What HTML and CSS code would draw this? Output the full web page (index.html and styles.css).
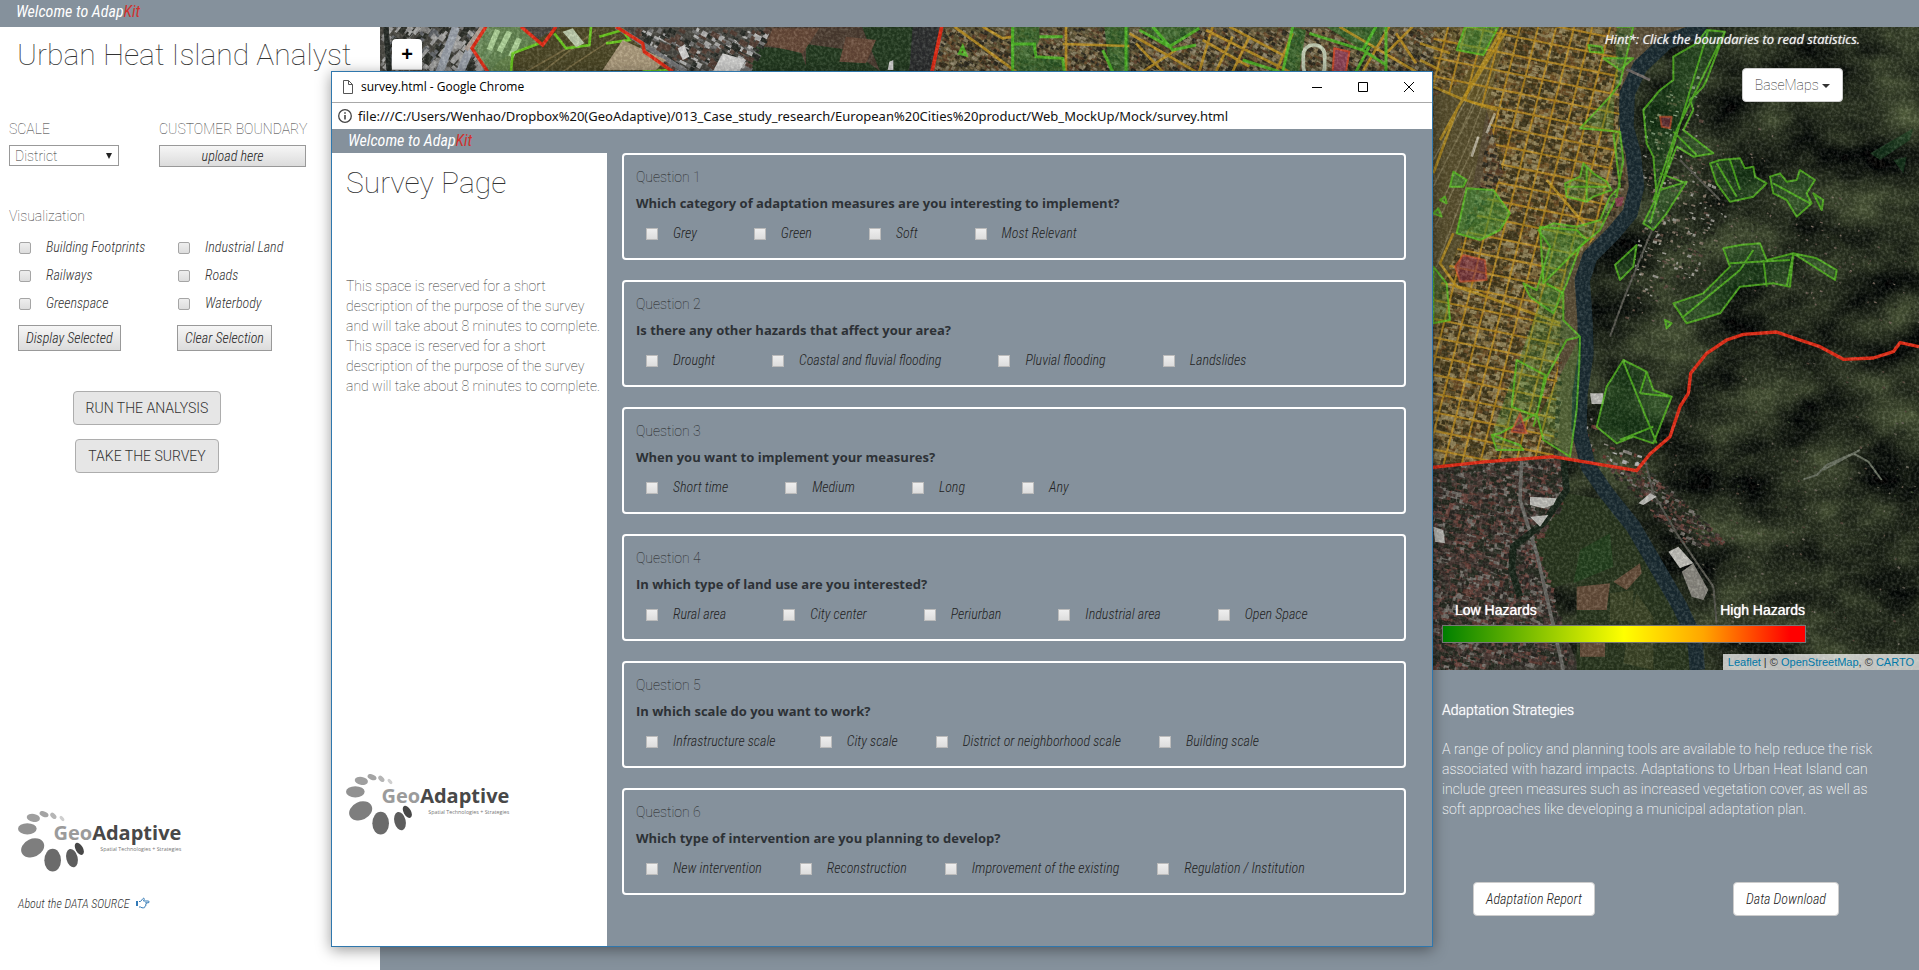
FILE: index.html
```html
<!DOCTYPE html>
<html lang="en">
<head>
<meta charset="utf-8">
<title>AdapKit - Urban Heat Island Analyst</title>
<link rel="stylesheet" href="styles.css">
</head>
<body>
<svg class="defs" width="0" height="0" aria-hidden="true">
  <symbol id="logo" viewBox="54 152 492 182">
    <ellipse cx="82" cy="205" rx="28" ry="17" fill="#919191"/>
    <ellipse cx="98" cy="262" rx="36" ry="27" fill="#7e7e7e" transform="rotate(-25 98 262)"/>
    <ellipse cx="158" cy="299" rx="25" ry="34" fill="#6b6b6b"/>
    <ellipse cx="216" cy="293" rx="17" ry="28" fill="#5d5d5d" transform="rotate(-14 216 293)"/>
    <ellipse cx="238" cy="265" rx="11" ry="20" fill="#474747" transform="rotate(-30 238 265)"/>
    <ellipse cx="100" cy="172" rx="20" ry="12" fill="#9f9f9f" transform="rotate(10 100 172)"/>
    <ellipse cx="132" cy="161" rx="14" ry="8" fill="#a4a4a4" transform="rotate(22 132 161)"/>
    <ellipse cx="160" cy="166" rx="11" ry="7" fill="#b5b5b5" transform="rotate(45 160 166)"/>
    <ellipse cx="186" cy="174" rx="9" ry="5" fill="#cfcfcf" transform="rotate(50 186 174)"/>
    <text x="544" y="238" class="logo-name" text-anchor="end" fill="#484848"><tspan fill="#9b9b9b">Geo</tspan>Adaptive</text>
    <text x="544" y="270" class="logo-tag" text-anchor="end" fill="#777">Spatial Technologies + Strategies</text>
  </symbol>
</svg>

<header class="topbar">Welcome to Adap<span class="kit">Kit</span></header>

<div class="page">
  <aside class="sidebar">
    <h1 class="title">Urban Heat Island Analyst</h1>
    <div class="inputs">
      <div class="field">
        <label class="thin" for="scale">SCALE</label>
        <select id="scale" class="scale"><option>District</option></select>
      </div>
      <div class="field">
        <label class="thin" for="upload">CUSTOMER BOUNDARY</label>
        <button id="upload" class="classic upload">upload here</button>
      </div>
    </div>
    <h2 class="thin vis-title">Visualization</h2>
    <div class="layers">
      <label class="opt"><input type="checkbox">Building Footprints</label>
      <label class="opt"><input type="checkbox">Industrial Land</label>
      <label class="opt"><input type="checkbox">Railways</label>
      <label class="opt"><input type="checkbox">Roads</label>
      <label class="opt"><input type="checkbox">Greenspace</label>
      <label class="opt"><input type="checkbox">Waterbody</label>
      <div class="layer-btn"><button class="classic">Display Selected</button></div>
      <div class="layer-btn"><button class="classic">Clear Selection</button></div>
    </div>
    <div class="actions">
      <button class="big">RUN THE ANALYSIS</button>
      <button class="big">TAKE THE SURVEY</button>
    </div>
    <div class="side-foot">
      <svg class="logo" role="img" aria-label="GeoAdaptive"><use href="#logo"/></svg>
      <div class="about">About the DATA SOURCE
        <a href="#source" aria-label="Data source"><svg width="14" height="12" viewBox="0 0 14 12" fill="none" stroke="#337ab7"><path d="M1 4v5" stroke-width="2"/><path d="M3 4.500h1.500L7 1.500c1-.8 1.800.3 1 1.500L7.500 4H12c1.600 0 1.600 1.800 0 1.800H9.500M9.500 5.800c1.500.3 1.300 1.700 0 1.800M9 7.600c1.200.4 1 1.600 0 1.700M8.600 9.300c.6.800.1 1.500-.8 1.500H6L4.500 10H3"/></svg></a>
      </div>
    </div>
  </aside>

  <main class="main">
    <section class="map" aria-label="Map">
      <svg class="imagery" viewBox="380 27 1539 643" preserveAspectRatio="xMaxYMin slice" aria-hidden="true">
        <defs>
          <filter id="forest" x="0" y="0" width="100%" height="100%" color-interpolation-filters="sRGB">
            <feTurbulence type="fractalNoise" baseFrequency=".014 .022" numOctaves="6" seed="8"/>
            <feColorMatrix values=".5 0 0 0 -.115  .55 0 0 0 -.11  .35 0 0 0 -.065  0 0 0 0 1"/>
          </filter>
          <filter id="grain" x="0" y="0" width="100%" height="100%" color-interpolation-filters="sRGB">
            <feTurbulence type="fractalNoise" baseFrequency=".35" numOctaves="2" seed="3"/>
            <feColorMatrix values="2.2 0 0 0 -.85  2.2 0 0 0 -.85  2.2 0 0 0 -.9  0 0 0 0 .14"/>
          </filter>
          <clipPath id="streets"><path d="M250 80H590L600 400 560 600 540 700 440 800 420 1000 400 1366 40 1400V900L120 730 250 520 200 330 40 260V80Z"/></clipPath>
        </defs>
        <rect x="380" y="27" width="1539" height="643" filter="url(#forest)"/>

        <g transform="translate(1420 0) scale(.33333)">
          <path fill="#5d5039" d="M0 80H830L700 150 610 300 620 420 640 600 480 800 480 1380 0 1400Z"/>
          <path fill="#3b3832" d="M0 1390 420 1370 440 1480 350 1600 380 1760 480 2010H0Z"/>
          <path fill="#29371f" d="M440 1480 560 1500 700 1700 820 1900 840 2010H470V1740L380 1770 340 1620Z"/>
          <path fill="#24421f" d="M480 1650 570 1600 580 1700 460 1750Z"/>
          <path fill="#69503d" d="M470 1760 570 1750 560 1830H470ZM580 1745 660 1690 665 1720 620 1770ZM480 1920H555V1970H480Z"/>
          <path fill="#3e4729" d="M570 1780 640 1770 640 1860 570 1865ZM650 1780 700 1850 700 2010 610 1990 620 1920Z"/>
          <path fill="#1d4a26" opacity=".6" d="M1350 460 1480 385 1470 420 1380 480ZM1420 480 1460 470 1450 520Z"/>
        </g>
        <path fill="#4c4b46" d="M380 27H780L760 71H380Z"/>
        <path fill="#4f3f34" d="M766 27H1048L1040 71H750Z"/>
        <path fill="#243d22" d="M752 46 800 50 808 71H746ZM806 44 850 50 880 71H806ZM862 27 940 27 930 71 880 71Z"/>
        <path fill="#5c5437" d="M940 27H1460V71H930Z"/>
        <path fill="#4f4a28" d="M500 60 560 27 620 27 670 71H490Z"/>
        <g id="roofs"></g>

        <g transform="translate(1420 0) scale(.33333)" fill="none" stroke-linejoin="round">
          <path fill="#5c5230" d="M40 290 120 250 230 95 262 85 200 330 165 520 120 740 40 900Z"/>
          <g stroke="#9a8f6a" stroke-width="4" opacity=".55"><path d="M40 560 110 420 240 130M60 620 140 440 250 150M45 680 100 570 180 400M40 480 100 370 200 190M50 800 110 640 160 500M90 460 210 230"/></g>
          <path stroke="#d6d0bd" stroke-width="8" opacity=".8" d="M155 470 175 410M200 400 225 340"/>
          <path stroke="#1b2d35" stroke-width="46" d="M860 85 740 125 660 200 622 280 618 380 640 460 650 560 630 640 580 700 510 770 487 840 495 960 498 1060 480 1180 477 1290 505 1400 560 1480 640 1580 710 1700 780 1820 825 1920 832 2010"/>
          <path stroke="#77706d" stroke-width="8" d="M620 208 690 240"/>
          <path stroke="#6e6d69" stroke-width="11" d="M305 1375 300 1500 350 1660 380 1790 430 2010"/>
          <path stroke="#5a5a53" stroke-width="6" d="M675 1380 700 1480 770 1600 880 1760 890 1870M780 480 900 600M700 680 610 900 570 1010"/>
          <path stroke="#6f7768" stroke-width="6" d="M1150 1438 1190 1425 1220 1395 1300 1360 1345 1385 1385 1440M1210 1410 1320 1350"/>
          <path stroke="#17251a" stroke-width="20" d="M430 1375 440 1470 370 1570 280 1640 275 1710 300 1790"/>
          <path fill="#c9c8c3" d="M745 1655 775 1640 820 1690 790 1700 780 1705Z"/>
          <path fill="#8f8d86" d="M785 1715 820 1690 865 1770 850 1800 815 1790Z"/>
          <path fill="#c6c6c2" d="M330 1490 410 1495 400 1515 370 1525 330 1515ZM655 1510 690 1480 710 1490 670 1515ZM510 1180 550 1180 550 1212 515 1212ZM330 1550 385 1545 360 1580ZM40 1580 70 1590 75 1630 45 1625Z"/>

          <g clip-path="url(#streets)">
            <rect x="40" y="80" width="600" height="1320" fill="#b58b10" opacity=".15"/>
            <path id="grid" stroke="#d9a01c" stroke-width="6" opacity=".7"/>
          </g>
          <path stroke="#cfa01f" stroke-width="8" opacity=".75" d="M260 90 110 330 40 520M40 260 120 295 230 330M245 90 60 420M100 700 60 790 110 860 200 890 420 970M380 540 500 680M0 180 60 210M0 130 90 160"/>

          <g stroke="#5fd423" stroke-width="6" fill="#3da637" fill-opacity=".26" stroke-opacity=".75">
            <path fill-opacity=".5" d="M135 80 110 150 190 165 235 80ZM100 515 140 540 130 560 90 560ZM140 565 220 570 270 640 240 690 180 720 110 700Z"/>
            <path d="M505 135 545 140 550 158 510 155ZM550 175 640 175 600 210Z"/>
            <path d="M590 80 640 80 600 250 570 290 480 385 600 395 610 480 590 590 540 690 480 740 440 850 400 940 330 890 310 850 350 870 390 740 355 690 400 670 470 680 540 660 570 590 600 560 580 400"/>
            <path d="M490 490 520 520 560 545 575 570 520 590 500 605 440 590 435 550 480 530ZM360 680 470 690 500 720 440 780 370 850ZM440 560 560 560M500 500 500 600"/>
            <path d="M380 850 430 880 430 960 480 1010 478 1090 470 1230 450 1370 370 1320 350 1240 240 1300 215 1305M480 1010 440 1020 380 1130 340 1280M290 1080 375 1125 350 1250 275 1220Z"/>
            <path d="M215 1305 300 1335 310 1350 230 1350Z"/>
            <path d="M860 90 915 95 860 240 850 260 810 300 820 330 790 390 880 460 820 470 770 440 720 570 800 545 740 640 700 690 670 670 710 590 700 470 680 430 670 330 720 270 760 240 760 170 830 130ZM865 90 690 670M915 95 770 390 700 600M760 395 830 465M720 520 800 550"/>
            <path d="M870 490 900 480 960 475 975 505 1000 500 1005 530 1040 550 1000 590 930 605 890 550ZM890 490 950 590M930 480 960 570M1050 530 1080 520 1100 545 1130 540 1140 510 1185 540 1160 580 1175 610 1130 650 1100 600 1060 580ZM1060 550 1170 610M1180 580 1210 600 1205 630Z"/>
            <path d="M910 745 960 735 1020 730 1040 780 1120 760 1110 860 1060 850 960 860 900 940 800 970 760 910 850 880 930 800ZM1120 760 1190 775 1250 810 1245 840ZM1000 750 960 810 790 950M930 790 1110 780M1030 780 1040 860M1120 760 1100 860"/>
            <path d="M585 795 650 735 640 800 600 840ZM735 960 755 970 740 985Z"/>
            <path d="M560 1160 610 1080 680 1115 700 1170 755 1190 700 1330 640 1310 590 1330 530 1280ZM610 1085 710 1330M600 1320 700 1280M680 1115 660 1180M755 1190 660 1180"/>
            <path d="M40 800 80 850 90 960 40 970ZM40 640 55 625 65 650ZM60 600 75 590 80 610Z"/>
          </g>
          <path fill="#92304c" fill-opacity=".6" stroke="#e2572c" stroke-width="6" stroke-opacity=".6" d="M105 800 130 765 195 780 200 840 120 845ZM300 1240 320 1300 275 1295ZM720 350 755 350 750 385 725 380Z"/>
          <path fill="#8e4455" d="M585 595 612 590 605 618 588 620Z"/>
          <path stroke="#ee2d17" stroke-width="10" d="M30 1403 200 1385 400 1370 650 1412 690 1362 750 1310 780 1220 805 1180 812 1120 860 1060 920 1020 970 1003 1070 996 1140 1020 1200 1040 1270 1078 1360 1074 1420 1055 1440 1028 1497 1040"/>
        </g>

        <g transform="translate(376 20) scale(.33333)" fill="none">
          <path stroke="#a3aab5" stroke-width="24" d="M240 20 190 160M290 70 250 160"/>
          <path stroke="#b9aaa0" stroke-width="14" d="M320 20 270 90"/>
          <path stroke="#252b28" stroke-width="16" d="M30 20 40 160"/>
          <path stroke="#7c7d80" stroke-width="14" d="M720 20 930 155"/>
          <path fill="#72a05c" fill-opacity=".75" d="M330 20H440L490 75 415 100 405 155H335L290 85Z"/>
          <path stroke="#b6dca0" stroke-width="17" d="M365 30 340 90M400 35 370 95M430 55 405 110"/>
          <path stroke="#7d7046" stroke-width="5" d="M660 30 500 155M720 50 560 155M600 70 450 155"/>
          <path stroke="#6fd321" stroke-width="8" d="M490 70 410 100 405 155M535 40 570 85 640 75 645 20M670 50 740 30 760 60 690 70M800 155 880 150"/>
          <path fill="#c7d6b6" d="M560 35 590 25 625 70 600 82Z"/>
          <path fill="#b5a384" d="M740 60 870 120 840 150 680 150Z"/>
          <path fill="#ddd" d="M1040 100 1110 120 1090 155 1010 155ZM905 85 925 75 940 110 920 120ZM1540 125 1552 120 1552 150 1535 150Z"/>
          <path fill="#6c4d3c" d="M1190 25 1330 25 1280 100 1170 75ZM1410 50 1500 60 1470 130 1390 125Z"/>
          <path stroke="#ee2d17" stroke-width="10" d="M330 20 288 85 335 155M435 20 500 75 540 20M720 20 800 70 805 95 890 155"/>
        </g>
        <g transform="translate(896 20) scale(.33333)" fill="none">
          <path fill="#2e3032" d="M50 20H140L110 155H40Z"/>
          <path fill="#2b7a2b" fill-opacity=".6" d="M345 20H430V60L410 110 500 120V155H345ZM625 20H700V155H640ZM730 20H910L820 80ZM1190 20 1230 30 1210 155 1160 150ZM1290 20H1470L1440 80 1400 90Z"/>
          <path stroke="#d3a021" stroke-width="8" opacity=".8" d="M175 20 360 155M260 20 320 55 350 50M510 20V155M500 72 700 78M700 40 900 155M720 70 800 155M840 90 740 155M920 60 1060 140M950 20 910 155M930 30 1180 155M1000 20 1170 110M1060 50 1010 155M960 155 1010 50M1190 40 1140 155M1330 20 1560 155M1480 20 1400 155M1550 20 1470 100M1500 40 1560 130"/>
          <path stroke="#51cf26" stroke-width="9" opacity=".8" d="M350 20V155M345 72H420M430 50 500 50M415 75 420 110 500 115 505 155M690 20V155M620 90 650 155M730 30 820 80 910 25M770 20 830 90 900 75M1190 20 1160 155M1240 40 1400 90 1470 135M1400 90 1440 20M1380 155 1420 80M1040 120 1150 155M1470 20V155M190 100 200 80 210 105Z"/>
          <rect x="1222" y="75" width="64" height="95" rx="30" stroke="#cdd8bf" stroke-width="11"/>
          <path fill="#96475c" stroke="#d44b2d" stroke-width="6" d="M1315 85 1360 95 1350 155H1310Z"/>
          <path stroke="#ee2d17" stroke-width="11" d="M137 20 108 155"/>
        </g>
        <rect x="380" y="27" width="1539" height="643" filter="url(#grain)"/>
      </svg>
      <div class="map-top">
        <button class="zoom-in" aria-label="Zoom in">+</button>
        <div class="map-tools">
          <div class="hint">Hint*: Click the boundaries to read statistics.</div>
          <button class="white-btn base">BaseMaps <span class="caret"></span></button>
        </div>
      </div>
      <div class="map-bottom">
        <div class="legend">
          <div class="legend-labels"><span>Low Hazards</span><span>High Hazards</span></div>
          <div class="legend-bar"></div>
        </div>
        <div class="attribution"><a href="#leaflet">Leaflet</a> | © <a href="#osm">OpenStreetMap</a>, © <a href="#carto">CARTO</a></div>
      </div>
    </section>
    <section class="info">
      <h2>Adaptation Strategies</h2>
      <p>A range of policy and planning tools are available to help reduce the risk<br>associated with hazard impacts. Adaptations to Urban Heat Island can<br>include green measures such as increased vegetation cover, as well as<br>soft approaches like developing a municipal adaptation plan.</p>
      <div class="info-btns">
        <button class="white-btn">Adaptation Report</button>
        <button class="white-btn">Data Download</button>
      </div>
    </section>
  </main>
</div>

<div class="window" role="dialog" aria-label="survey.html - Google Chrome">
  <div class="win-title">
    <svg width="12" height="16" viewBox="0 0 12 16" fill="none" stroke="#555"><path d="M1.500 1.500h5l4 4v9h-9zM6.500 1.500v4h4"/></svg>
    <span class="win-name">survey.html - Google Chrome</span>
    <div class="win-btns">
      <button aria-label="Minimize"><svg width="12" height="12" viewBox="0 0 12 12" stroke="#000"><path d="M1 6.500h10"/></svg></button>
      <button aria-label="Maximize"><svg width="12" height="12" viewBox="0 0 12 12" fill="none" stroke="#000"><path d="M1.500 1.500h9v9h-9z"/></svg></button>
      <button aria-label="Close"><svg width="12" height="12" viewBox="0 0 12 12" stroke="#000"><path d="M1 1l10 10M11 1L1 11"/></svg></button>
    </div>
  </div>
  <div class="win-url">
    <svg width="14" height="14" viewBox="0 0 14 14" fill="none" stroke="#444"><circle cx="7" cy="7" r="6.300" stroke-width="1.300"/><path d="M7 6v4.500M7 3.300v1.500" stroke-width="1.600"/></svg>
    <span>file:///C:/Users/Wenhao/Dropbox%20(GeoAdaptive)/013_Case_study_research/European%20Cities%20product/Web_MockUp/Mock/survey.html</span>
  </div>
  <div class="win-head">Welcome to Adap<span class="kit">Kit</span></div>
  <div class="win-body">
    <div class="survey-side">
      <h1 class="title">Survey Page</h1>
      <p class="thin">This space is reserved for a short<br>description of the purpose of the survey<br>and will take about 8 minutes to complete.<br>This space is reserved for a short<br>description of the purpose of the survey<br>and will take about 8 minutes to complete.</p>
      <svg class="logo" role="img" aria-label="GeoAdaptive"><use href="#logo"/></svg>
    </div>
    <form class="questions">
      <section class="card"><h3 class="thin">Question 1</h3><h4>Which category of adaptation measures are you interesting to implement?</h4>
        <div class="row"><label class="opt"><input type="checkbox">Grey</label><label class="opt"><input type="checkbox">Green</label><label class="opt"><input type="checkbox">Soft</label><label class="opt"><input type="checkbox">Most Relevant</label></div></section>
      <section class="card"><h3 class="thin">Question 2</h3><h4>Is there any other hazards that affect your area?</h4>
        <div class="row"><label class="opt"><input type="checkbox">Drought</label><label class="opt"><input type="checkbox">Coastal and fluvial flooding</label><label class="opt"><input type="checkbox">Pluvial flooding</label><label class="opt"><input type="checkbox">Landslides</label></div></section>
      <section class="card"><h3 class="thin">Question 3</h3><h4>When you want to implement your measures?</h4>
        <div class="row"><label class="opt"><input type="checkbox">Short time</label><label class="opt"><input type="checkbox">Medium</label><label class="opt"><input type="checkbox">Long</label><label class="opt"><input type="checkbox">Any</label></div></section>
      <section class="card"><h3 class="thin">Question 4</h3><h4>In which type of land use are you interested?</h4>
        <div class="row"><label class="opt"><input type="checkbox">Rural area</label><label class="opt"><input type="checkbox">City center</label><label class="opt"><input type="checkbox">Periurban</label><label class="opt"><input type="checkbox">Industrial area</label><label class="opt"><input type="checkbox">Open Space</label></div></section>
      <section class="card"><h3 class="thin">Question 5</h3><h4>In which scale do you want to work?</h4>
        <div class="row tight"><label class="opt"><input type="checkbox">Infrastructure scale&nbsp;&nbsp;</label><label class="opt"><input type="checkbox">City scale</label><label class="opt"><input type="checkbox">District or neighborhood scale</label><label class="opt"><input type="checkbox">Building scale</label></div></section>
      <section class="card"><h3 class="thin">Question 6</h3><h4>Which type of intervention are you planning to develop?</h4>
        <div class="row tight"><label class="opt"><input type="checkbox">New intervention</label><label class="opt"><input type="checkbox">Reconstruction</label><label class="opt"><input type="checkbox">Improvement of the existing</label><label class="opt"><input type="checkbox">Regulation / Institution</label></div></section>
    </form>
  </div>
</div>
<script src="map.js"></script>
</body>
</html>
```
FILE: styles.css
```css
* { box-sizing: border-box; }
body { margin: 0; min-height: 100vh; display: flex; flex-direction: column; font: 14px/20px Roboto, sans-serif; color: #333; background: #85919c; overflow: hidden; }
h1, h2, h3, h4, p { margin: 0; }
button { cursor: pointer; }
.defs { position: absolute; }
.kit { color: #d0312d; }
.topbar, .win-head { background: #85919c; color: #fff; font: italic 400 16px/24px "Roboto Condensed", Roboto, sans-serif; }
.topbar { height: 27px; padding-left: 16px; flex: none; }
.page { display: flex; flex: 1; }
.thin { font-weight: 100; font-size: 14px; }
.title { font-weight: 100; font-size: 30px; line-height: 36px; white-space: nowrap; }

.sidebar { width: 380px; flex: none; background: #fff; display: flex; flex-direction: column; padding: 10px 9px 56px; }
.sidebar .title { padding-left: 8px; }
.inputs { display: grid; grid-template-columns: 110px 147px; column-gap: 40px; margin-top: 46px; }
.field { display: flex; flex-direction: column; gap: 6px; }
.field label { white-space: nowrap; }
.scale { height: 21px; appearance: none; border: 1px solid #999; padding: 0 5px; color: #333; background: #fff; font: 100 14px/18px Roboto, sans-serif; }
.field:first-child { position: relative; }
.field:first-child::after { content: ""; position: absolute; right: 7px; bottom: 8px; border: 3px solid transparent; border-top: 6px solid #222; border-bottom: 0; pointer-events: none; }
.classic { border: 1px solid #999; background: linear-gradient(#f6f6f6, #dcdcdc); font: italic 300 14px/18px "Roboto Condensed", Roboto, sans-serif; color: #222; height: 26px; padding: 0 7px; white-space: nowrap; }
.upload { height: 22px; }
.vis-title { margin-top: 39px; }
.layers { display: grid; grid-template-columns: 159px 1fr; padding-left: 9px; margin-top: 11px; row-gap: 8px; }
.layer-btn { margin-top: 4px; }
.opt { display: flex; align-items: center; font: italic 300 14px/20px "Roboto Condensed", Roboto, sans-serif; white-space: nowrap; }
.opt input { appearance: none; width: 12px; height: 12px; margin: 2px 15px 0 1px; border: 1px solid #a5a5a5; border-radius: 2px; background: linear-gradient(#eee, #ddd); }
.actions { display: flex; flex-direction: column; align-items: center; gap: 14px; margin: 40px 86px 0 0; }
.big { height: 34px; padding: 0 12px; border: 1px solid #adadad; border-radius: 4px; background: #e6e6e6; color: #333; font: 300 14px/20px Roboto, sans-serif; }
.side-foot { margin-top: auto; padding-left: 9px; }
.logo { display: block; width: 164px; height: 61px; }
.logo-name { font: 700 60px "Open Sans", sans-serif; }
.logo-tag { font: 400 16px "Open Sans", sans-serif; }
.about { margin-top: 22px; font: italic 300 12px/20px "Roboto Condensed", Roboto, sans-serif; }
.about a { margin-left: 4px; }
.about svg { vertical-align: -1px; }

.main { flex: 1; min-width: 0; display: flex; flex-direction: column; }
.map { flex: 1; position: relative; display: flex; flex-direction: column; justify-content: space-between; overflow: hidden; background: #232b20; }
.imagery { position: absolute; inset: 0; width: 100%; height: 100%; }
.map-top { position: relative; display: flex; justify-content: space-between; align-items: flex-start; padding: 0 59px 0 12px; }
.zoom-in { width: 30px; height: 31px; margin-top: 12px; border: 0; border-bottom: 1px solid #ccc; border-radius: 4px 4px 0 0; background: #fff; font: 700 20px/30px "Liberation Sans", sans-serif; color: #000; padding: 0; }
.map-tools { display: flex; flex-direction: column; align-items: flex-end; gap: 19px; padding-top: 2px; }
.hint { color: #eee; font: italic 400 13px/20px "Open Sans", sans-serif; text-shadow: 0 0 1px #ddd; }
.white-btn { height: 34px; padding: 0 12px; border: 1px solid #ccc; border-radius: 4px; background: #fff; color: #222; font: italic 300 14px/20px "Roboto Condensed", Roboto, sans-serif; }
.base { font: 100 14px/20px Roboto, sans-serif; margin-right: 17px; }
.caret { display: inline-block; border: 4px solid transparent; border-top-color: #333; border-bottom: 0; vertical-align: middle; }
.map-bottom { position: relative; display: flex; flex-direction: column; align-items: flex-end; gap: 11px; }
.legend { width: 364px; margin-right: 113px; }
.legend-labels { display: flex; justify-content: space-between; padding: 0 1px 0 13px; margin-bottom: 5px; color: #fff; font: 14px/20px "Liberation Sans", sans-serif; text-shadow: 0 0 1px #fff; }
.legend-bar { height: 18px; border: 1px solid #777; background: linear-gradient(90deg, green, yellow 50%, orange 72%, red 96%); }
.attribution { background: rgba(255, 255, 255, .72); padding: 0 5px; font: 11px/16px "Liberation Sans", sans-serif; color: #333; }
.attribution a { color: #0078a8; text-decoration: none; }

.info { background: #85919c; color: #fff; flex: none; align-self: flex-end; width: 477px; height: 300px; padding-top: 30px; font-weight: 200; }
.info h2 { font: 300 14px/20px Roboto, sans-serif; text-shadow: 0 0 1px #fff; }
.info p { margin-top: 19px; white-space: nowrap; }
.info-btns { display: flex; justify-content: space-between; margin: 63px 80px 0 31px; }

.window { position: absolute; left: 331px; top: 71px; width: 1102px; height: 876px; display: flex; flex-direction: column; border: 1px solid #2f77ad; background: #85919c; box-shadow: 0 3px 14px rgba(0, 0, 0, .4); }
.win-title { flex: none; height: 31px; display: flex; align-items: center; padding-left: 10px; background: #fff; border-bottom: 1px solid #a8a8a8; color: #000; }
.win-name { font: 12px/20px "Open Sans", sans-serif; margin-left: 7px; }
.win-btns { margin-left: auto; display: flex; }
.win-btns button { width: 46px; height: 30px; border: 0; background: none; padding: 0; display: grid; place-items: center; }
.win-url { flex: none; height: 26px; display: flex; align-items: center; gap: 6px; padding-left: 6px; background: #fff; color: #111; font: 13px/20px "Noto Sans", sans-serif; white-space: nowrap; }
.win-head { flex: none; padding-left: 16px; }
.win-body { flex: 1; display: flex; min-height: 0; }
.survey-side { width: 275px; flex: none; background: #fff; padding: 12px 0 111px 14px; display: flex; flex-direction: column; }
.survey-side p { margin-top: 75px; white-space: nowrap; }
.survey-side .logo { margin-top: auto; }
.questions { flex: 1; padding: 0 26px 0 15px; display: flex; flex-direction: column; gap: 20px; }
.card { height: 107px; border: 2px solid #fff; border-radius: 4px; padding: 12px; color: #222; }
.card h4 { font: 700 13px/20px "Open Sans", sans-serif; margin-top: 6px; color: #2d3136; }
.row { display: flex; gap: 56px; padding-left: 9px; margin-top: 10px; }
.row.tight { gap: 37px; }
.row .opt input { border-color: #bbb; border-radius: 0; }
```
FILE: map.js
```js
// Scatters rooftops and trees over the imagery and draws the street grid.
let seed = 17;
const rnd = () => (seed = (seed * 16807) % 2147483647) / 2147483647;
const roofs = document.getElementById('roofs');

function scatter(poly, step, angle, colours, density, size) {
  const inside = (x, y) => {
    let hit = false;
    for (let i = 0, j = poly.length - 1; i < poly.length; j = i++) {
      const [xi, yi] = poly[i], [xj, yj] = poly[j];
      if ((yi > y) !== (yj > y) && x < (xj - xi) * (y - yi) / (yj - yi) + xi) hit = !hit;
    }
    return hit;
  };
  const xs = poly.map(p => p[0]), ys = poly.map(p => p[1]);
  const paths = colours.map(() => '');
  const c = Math.cos(angle), s = Math.sin(angle);
  for (let y = Math.min(...ys); y < Math.max(...ys); y += step) {
    for (let x = Math.min(...xs); x < Math.max(...xs); x += step) {
      if (rnd() > density) continue;
      const px = x + rnd() * step, py = y + rnd() * step;
      if (!inside(px, py)) continue;
      const w = size * (0.5 + rnd()), h = size * (0.3 + rnd() * 0.7);
      const k = Math.floor(rnd() * colours.length);
      paths[k] += `M${px.toFixed(1)} ${py.toFixed(1)}l${(w * c).toFixed(1)} ${(w * s).toFixed(1)} ${(-h * s).toFixed(1)} ${(h * c).toFixed(1)} ${(-w * c).toFixed(1)} ${(-w * s).toFixed(1)}z`;
    }
  }
  colours.forEach((colour, k) => {
    const p = document.createElementNS('http://www.w3.org/2000/svg', 'path');
    p.setAttribute('d', paths[k]);
    p.setAttribute('fill', colour);
    roofs.append(p);
  });
}

const warm = ['#70502f', '#5e412b', '#85734f', '#38301f', '#91866a', '#2d2a20'];
const red = ['#5e3a33', '#6e4640', '#76726d', '#2b2724', '#4b3a36', '#262b22'];
scatter([[1500, 27], [1620, 27], [1620, 200], [1560, 270], [1555, 455], [1433, 462], [1433, 300], [1480, 180]], 3, 0.25, warm, 0.9, 5);
scatter([[1433, 27], [1500, 27], [1433, 160]], 3, 0.4, warm, 0.9, 4);
scatter([[1433, 465], [1560, 458], [1560, 500], [1535, 540], [1570, 660], [1433, 670]], 3, 0.25, red, 0.9, 5);
scatter([[940, 27], [1433, 27], [1433, 71], [930, 71]], 3, 0.5, warm, 0.8, 4);
scatter([[380, 27], [490, 27], [480, 71], [380, 71]], 4, -0.9, ['#888', '#666a70', '#2c2f2a', '#aaa'], 0.7, 7);
scatter([[630, 27], [770, 27], [745, 71], [670, 71]], 4, 0.5, ['#bbb', '#777', '#282c28', '#59433a'], 0.7, 6);
scatter([[912, 27], [942, 27], [932, 71], [908, 71]], 3, 0.2, ['#777', '#222', '#594545'], 0.8, 3);
scatter([[1640, 120], [1700, 60], [1700, 150], [1730, 220], [1700, 270], [1620, 320], [1640, 230]], 4, 0.3, ['#877b6c', '#5d4a40', '#a1a098', '#20251b'], 0.4, 3);
scatter([[1605, 465], [1650, 470], [1725, 540], [1700, 545], [1680, 540]], 3, 0.4, red, 0.7, 4);
scatter([[1580, 400], [1605, 440], [1650, 460], [1620, 475], [1580, 440]], 4, 0.3, ['#bbb', '#6e3f37', '#8d8983'], 0.4, 4);
scatter([[1650, 140], [1760, 120], [1919, 260], [1919, 330], [1780, 300], [1640, 330]], 5, 0.4, ['#5d5047', '#7a6a60', '#22281c'], 0.14, 2);
scatter([[1700, 370], [1919, 350], [1919, 670], [1740, 670], [1640, 470]], 6, 0.4, ['#5a4a40', '#6a655a', '#33402a'], 0.1, 2);

let d = '';
for (let x = 60; x < 960; x += 54) d += `M${x + 30} 60L${x - 320} 1420`;
for (let y = -60; y < 1400; y += 56) d += `M0 ${y}L640 ${y + 130}`;
document.getElementById('grid').setAttribute('d', d);
```
